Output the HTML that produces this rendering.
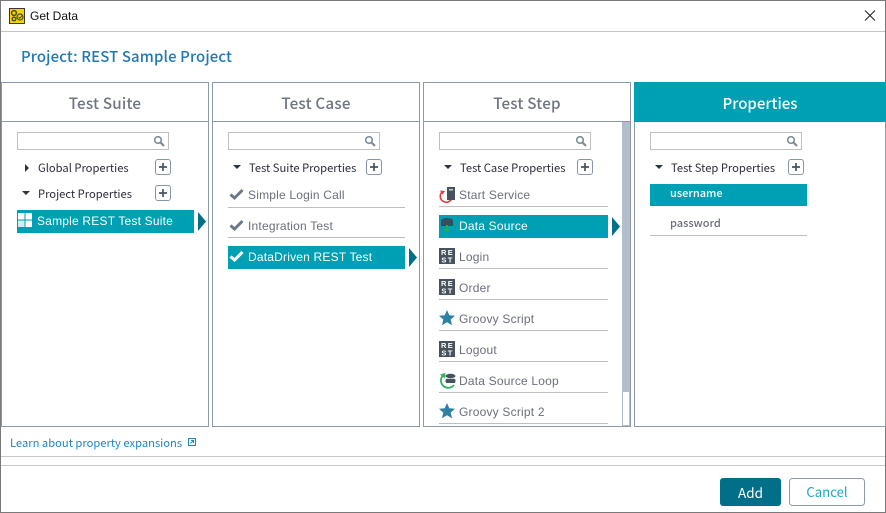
<!DOCTYPE html>
<html><head><meta charset="utf-8">
<style>
html,body{margin:0;padding:0;width:886px;height:513px;overflow:hidden;background:#fff}
.t{position:absolute;white-space:nowrap;height:20px;line-height:20px;font-family:"Liberation Sans",sans-serif;font-size:12px;color:#6b6f7b;letter-spacing:.2px}
.s{font-family:"Noto Sans CJK SC","Liberation Sans",sans-serif}
.h{font-size:15.2px;font-weight:500;color:#6f7580;letter-spacing:.2px;text-align:center}
.p{font-size:11.2px;color:#2b2b3a;letter-spacing:0}
svg{position:absolute;left:0;top:0}
</style></head><body>
<svg width="886" height="513" viewBox="0 0 886 513" xmlns="http://www.w3.org/2000/svg">
<defs>
<g id="mag" fill="none" stroke="#7f8d99"><circle cx="4" cy="4" r="3.3" stroke-width="1.6"/><path d="M6.5 6.5L10 10" stroke-width="2.2"/></g>
<g id="plus"><rect x=".5" y=".5" width="15" height="15" rx="2.5" fill="#fff" stroke="#8795a8"/><path d="M4 8h8M8 4v8" stroke="#4a5460" stroke-width="1.7"/></g>
<g id="rest"><rect width="16" height="16" fill="#47525e"/><text x="8.500" y="7" text-anchor="middle" font-family="Liberation Sans" font-weight="bold" font-size="7.500" letter-spacing="1.300" fill="#fff">RE</text><text x="8.500" y="14.700" text-anchor="middle" font-family="Liberation Sans" font-weight="bold" font-size="7.500" letter-spacing="1.300" fill="#fff">ST</text></g>
<path id="star" d="M8 0l2.3 5.3 5.7.5-4.3 3.8 1.3 5.6L8 12.3 3 15.2l1.3-5.6L0 5.8l5.7-.5z" fill="#2f80a5"/>
<path id="chk" d="M1.5 6.5L5.5 10L13.5 2" fill="none" stroke-width="3"/>
<path id="ard" d="M0 0h8L4 4z" fill="#2b3540"/>
</defs>
<rect x=".5" y=".5" width="885" height="512" fill="#fff" stroke="#7a7a7a"/>
<path d="M1 31.5H885" stroke="#c4c4c4"/>
<!-- app icon -->
<rect x="9.500" y="8.500" width="15" height="15" fill="#f5d20c" stroke="#3a3a2a"/>
<circle cx="14" cy="13" r="2.400" fill="none" stroke="#4a4a30" stroke-width="1.500"/><circle cx="14" cy="19" r="1.800" fill="none" stroke="#4a4a30" stroke-width="1.400"/><circle cx="20" cy="17" r="3" fill="none" stroke="#4a4a30" stroke-width="1.200"/><path d="M18.500 17l1.300 1.300 2.400-2.800" fill="none" stroke="#4a4a30"/>
<path d="M865 10.500L875 20.500M875 10.500L865 20.500" stroke="#222" stroke-width="1.100"/>
<!-- panels -->
<g fill="#fff" stroke="#8d99a9">
<rect x="1.500" y="82.500" width="207" height="344"/>
<rect x="212.500" y="82.500" width="207" height="344"/>
<rect x="423.500" y="82.500" width="207" height="344"/>
<rect x="634.500" y="82.500" width="251" height="344"/>
</g>
<path d="M2 121.500H208M213 121.500H419M424 121.500H630" stroke="#8d99a9"/>
<rect x="634" y="82" width="252" height="40" fill="#00a0b4"/>
<rect x="622" y="122" width="8" height="304" fill="#b3bdcc"/>
<rect x="623" y="392" width="6" height="33" fill="#fff"/>
<g fill="#fff" stroke="#bfbfbf">
<rect x="17.500" y="132.500" width="151" height="17"/>
<rect x="228.500" y="132.500" width="151" height="17"/>
<rect x="439.500" y="132.500" width="151" height="17"/>
<rect x="650.500" y="132.500" width="151" height="17"/>
</g>
<use href="#mag" x="154" y="136"/><use href="#mag" x="365" y="136"/><use href="#mag" x="576" y="136"/><use href="#mag" x="787" y="136"/>
<use href="#plus" x="155" y="159"/><use href="#plus" x="155" y="185"/><use href="#plus" x="366" y="159"/><use href="#plus" x="577" y="159"/><use href="#plus" x="788" y="159"/>
<path d="M25 164l4 4-4 4z" fill="#2b3540"/>
<use href="#ard" x="22" y="191"/><use href="#ard" x="233" y="165"/><use href="#ard" x="444" y="165"/><use href="#ard" x="655" y="165"/>
<g fill="#00a0b4">
<rect x="17" y="210" width="177" height="23"/>
<rect x="228" y="246" width="177" height="23"/>
<rect x="439" y="215" width="169" height="23"/>
<rect x="650" y="184" width="157" height="22"/>
</g>
<g fill="#006f87">
<path d="M198 212l8 9.500-8 9.500z"/><path d="M409 248l8 9.500-8 9.500z"/><path d="M612 217l8 9.500-8 9.500z"/>
</g>
<path d="M228 207.500H405M228 237.500H405M439 206.500H608M439 268.500H608M439 299.500H608M439 330.500H608M439 361.500H608M439 392.500H608M439 423.500H608M650 235.500H807" stroke="#bdbdbd"/>
<g fill="#fff"><rect x="18" y="213" width="6.500" height="6.500"/><rect x="25.500" y="213" width="6.500" height="6.500"/><rect x="18" y="220.500" width="6.500" height="6.500" fill="#cdeef2"/><rect x="25.500" y="220.500" width="6.500" height="6.500"/></g>
<use href="#chk" x="229" y="188" stroke="#6d7886"/><use href="#chk" x="229" y="219" stroke="#6d7886"/><use href="#chk" x="229" y="250" stroke="#fff"/>
<!-- start service -->
<path d="M442 192A6 6 0 1 0 452 198" fill="none" stroke="#e03a3a" stroke-width="1.600"/><path d="M440 190.500l5 .5-2.500 3.500z" fill="#e03a3a"/>
<rect x="447" y="187" width="8" height="13" fill="#47525e"/><rect x="449" y="189" width="4" height="1.500" fill="#c7ccd2"/>
<!-- data source -->
<ellipse cx="447" cy="220.500" rx="6" ry="2.500" fill="#35505c"/><rect x="441" y="221" width="12" height="5" fill="#35505c"/>
<path d="M447 225v5" stroke="#2fa84f" stroke-width="2"/><path d="M443.500 229h7l-3.500 4z" fill="#2fa84f"/>
<use href="#rest" x="439" y="248"/><use href="#rest" x="439" y="279"/><use href="#rest" x="439" y="341"/>
<use href="#star" x="439" y="310"/><use href="#star" x="439" y="403"/>
<!-- loop -->
<path d="M442.500 376A6.800 6.800 0 1 0 454 385" fill="none" stroke="#2fb35a" stroke-width="1.800"/><path d="M440 374.500l5.500-1.500-.5 5.500z" fill="#2fb35a"/>
<ellipse cx="450.500" cy="376" rx="5" ry="2.200" fill="#47525e"/><rect x="445.500" y="378.800" width="10" height="4.200" rx="1.800" fill="#47525e"/>
<!-- link icon -->
<rect x="188.500" y="438.500" width="7" height="7" fill="none" stroke="#1f84c4"/><path d="M190.500 443.500l3-3M191 440.500h2.500v2.500" fill="none" stroke="#1f84c4"/>
<path d="M1 456.500H885M1 465.500H885" stroke="#c8c8c8"/>
<rect x="720" y="478" width="61" height="28" rx="3" fill="#006f87"/>
<rect x="789.500" y="478.500" width="75" height="27" rx="3" fill="#fff" stroke="#8d9bb0"/>
</svg>

<div class="t" style="left:30px;top:6px;color:#111;letter-spacing:0">Get Data</div>
<div class="t s" style="left:21px;top:46px;height:22px;line-height:22px;font-size:14.900px;font-weight:500;color:#1f78b4;letter-spacing:.15px">Project: REST Sample Project</div>

<div class="t s h" style="left:2px;width:206px;top:93px">Test Suite</div>
<div class="t s h" style="left:213px;width:206px;top:93px">Test Case</div>
<div class="t s h" style="left:424px;width:206px;top:93px">Test Step</div>
<div class="t s h" style="left:634px;width:252px;top:94px;color:#fff;font-size:15px;letter-spacing:0">Properties</div>

<div class="t s p" style="left:38px;top:158px">Global Properties</div>
<div class="t s p" style="left:38px;top:184px">Project Properties</div>
<div class="t s p" style="left:249px;top:158px">Test Suite Properties</div>
<div class="t s p" style="left:460px;top:158px">Test Case Properties</div>
<div class="t s p" style="left:671px;top:158px">Test Step Properties</div>

<div class="t" style="left:37px;top:211px;color:#fff">Sample REST Test Suite</div>

<div class="t" style="left:248px;top:185px">Simple Login Call</div>
<div class="t" style="left:248px;top:216px">Integration Test</div>
<div class="t" style="left:248px;top:247px;color:#fff">DataDriven REST Test</div>

<div class="t" style="left:459px;top:185px">Start Service</div>
<div class="t" style="left:459px;top:216px;color:#fff">Data Source</div>
<div class="t" style="left:459px;top:247px">Login</div>
<div class="t" style="left:459px;top:278px">Order</div>
<div class="t" style="left:459px;top:309px">Groovy Script</div>
<div class="t" style="left:459px;top:340px">Logout</div>
<div class="t" style="left:459px;top:371px">Data Source Loop</div>
<div class="t" style="left:459px;top:402px">Groovy Script 2</div>

<div class="t s" style="left:670px;top:183px;font-size:11px;font-weight:500;color:#fff;letter-spacing:0">username</div>
<div class="t s" style="left:670px;top:213px;font-size:11px;font-weight:500;letter-spacing:0">password</div>

<div class="t s" style="left:10px;top:433px;font-size:11.200px;color:#1f84c4;letter-spacing:0">Learn about property expansions</div>

<div class="t s" style="left:720px;width:61px;top:482px;text-align:center;font-size:13.500px;color:#fff;letter-spacing:0">Add</div>
<div class="t s" style="left:789px;width:76px;top:482px;text-align:center;font-size:13.200px;color:#1fa8c4;letter-spacing:0">Cancel</div>
</body></html>
